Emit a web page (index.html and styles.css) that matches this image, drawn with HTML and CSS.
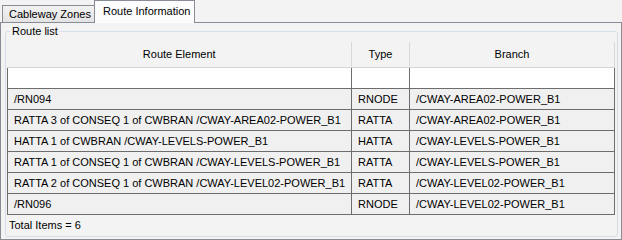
FILE: index.html
```html
<!DOCTYPE html>
<html lang="en">
<head>
    <meta charset="UTF-8">
    <title>Route Information</title>
    <link rel="stylesheet" href="styles.css">
</head>
<body>
<div class="tabs">
    <div class="tab">Cableway Zones</div>
    <div class="tab on">Route Information</div>
</div>
<div class="pane">
    <fieldset class="group">
        <legend>Route list</legend>
        <table class="grid">
            <colgroup>
                <col class="c1">
                <col class="c2">
                <col class="c3">
            </colgroup>
            <thead>
            <tr>
                <th>Route Element</th>
                <th>Type</th>
                <th>Branch</th>
            </tr>
            </thead>
            <tbody>
            <tr class="blank"><td></td><td></td><td></td></tr>
            <tr><td>/RN094</td><td>RNODE</td><td>/CWAY-AREA02-POWER_B1</td></tr>
            <tr><td>RATTA 3 of CONSEQ 1 of CWBRAN /CWAY-AREA02-POWER_B1</td><td>RATTA</td><td>/CWAY-AREA02-POWER_B1</td></tr>
            <tr><td>HATTA 1 of CWBRAN /CWAY-LEVELS-POWER_B1</td><td>HATTA</td><td>/CWAY-LEVELS-POWER_B1</td></tr>
            <tr><td>RATTA 1 of CONSEQ 1 of CWBRAN /CWAY-LEVELS-POWER_B1</td><td>RATTA</td><td>/CWAY-LEVELS-POWER_B1</td></tr>
            <tr><td>RATTA 2 of CONSEQ 1 of CWBRAN /CWAY-LEVEL02-POWER_B1</td><td>RATTA</td><td>/CWAY-LEVEL02-POWER_B1</td></tr>
            <tr><td>/RN096</td><td>RNODE</td><td>/CWAY-LEVEL02-POWER_B1</td></tr>
            </tbody>
        </table>
        <div class="total">Total Items = 6</div>
    </fieldset>
</div>
</body>
</html>
```

FILE: styles.css
```css
html,body{margin:0;padding:0;}
body{
    width:622px;
    height:240px;
    background:#f3f3f3;
    font-family:"Liberation Sans",Arial,sans-serif;
    font-size:11px;
    color:#000;
    overflow:hidden;
}

/* tab strip */
.tabs{
    display:flex;
    align-items:flex-end;
    height:22px;
    padding-left:2px;
}
.tab{
    box-sizing:border-box;
    height:17px;
    line-height:16px;
    padding:0 0 0 6px;
    border:1px solid #898c95;
    border-bottom:none;
    background:linear-gradient(#f2f2f2,#e3e3e3);
    width:93px;
    white-space:nowrap;
}
.tab.on{
    position:relative;
    z-index:1;
    height:23px;
    line-height:21px;
    width:101px;
    margin-left:-1px;
    margin-bottom:-1px;
    padding-left:8px;
    background:#fcfcfc;
}

/* page body */
.pane{
    box-sizing:border-box;
    height:218px;
    border:1px solid #898c95;
    padding:2px 3px 1px 4px;
}
.group{
    box-sizing:border-box;
    height:212px;
    margin:0;
    padding:4px 2px 0 1px;
    border:1px solid #d5dfe5;
    border-radius:3px;
    min-width:0;
}
.group legend{
    padding:0 2px;
    margin-left:3px;
    line-height:13px;
}

/* list */
.grid{
    border-collapse:collapse;
    width:607px;
    table-layout:fixed;
}
.grid .c1{width:344px;}
.grid .c2{width:58px;}
.grid .c3{width:205px;}
.grid th{
    height:24px;
    padding:0 0 1px 0;
    font-weight:normal;
    text-align:center;
    border-right:1px solid #d9d9d9;
    border-bottom:1px solid #d5d5d5;
}
.grid td{
    height:20px;
    padding:0 0 0 6px;
    background:#f0f0f0;
    border:1px solid #6d6d6d;
    border-top:none;
    white-space:nowrap;
    overflow:hidden;
}
.grid .blank td{background:#fff;}
.total{
    padding:4px 0 0 2px;
}
```
